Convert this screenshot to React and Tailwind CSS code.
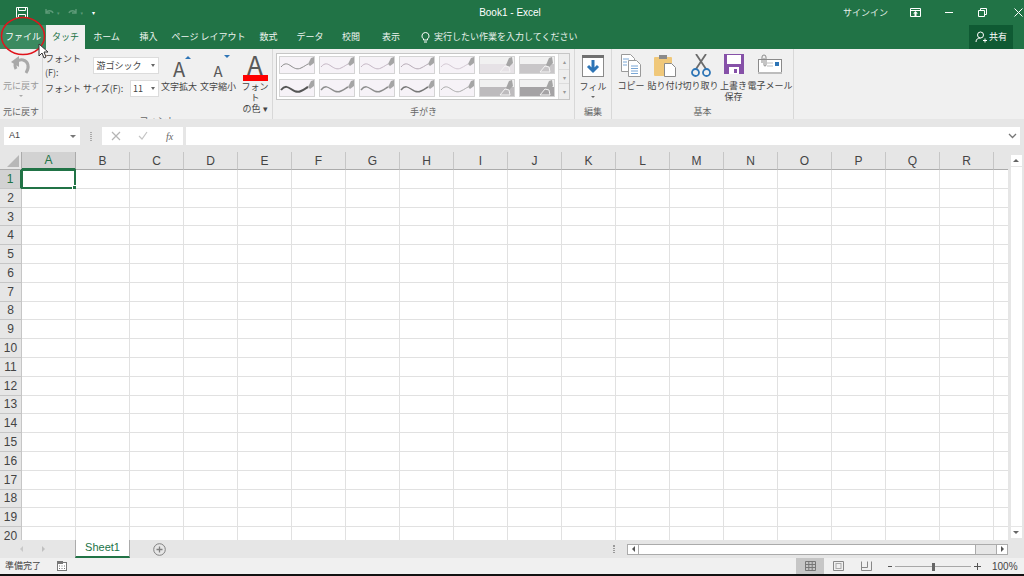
const font = { fontFamily: '"Noto Sans CJK JP", "Noto Sans", sans-serif' };
const columns = "ABCDEFGHIJKLMNOPQR".split("");
const rows = Array.from({ length: 20 }, (_, i) => i + 1);

const Wave = ({ color, width }) => (
  <svg width="36" height="18" viewBox="0 0 36 18" className="block">
    <rect x="0.5" y="0.5" width="35" height="17" fill="#f6f2f7" stroke="#d4d4d4" />
    <path d="M2 11c4-5 7-3 10-1s6 4 10 2 5-3 7-4" fill="none" stroke={color} strokeWidth={width} />
    <path d="M29 8l3-6 3-1v6l-4 3z" fill="#a5a5a5" />
  </svg>
);

const Marker = ({ color, top }) => (
  <svg width="36" height="18" viewBox="0 0 36 18" className="block">
    <rect x="0.5" y="0.5" width="35" height="17" fill="#f1f1f1" stroke="#d4d4d4" />
    <rect x="1" y={top} width="34" height={16 - top + 1} fill={color} />
    <path d="M27 9l3-7 3-1 1 6-4 4z" fill="#a5a5a5" />
    <path d="M21 16l5-6 4 1 1 5z" fill="none" stroke="#f4f4f4" strokeWidth="1" />
  </svg>
);

const FileIcon = () => (
  <svg width="14" height="13" viewBox="0 0 14 13">
    <path d="M1.5 1.5h11v10h-11z" fill="none" stroke="#fff" />
    <path d="M3.5 1.5v3h7v-3M3.5 11.5v-3h7v3" fill="none" stroke="#fff" />
  </svg>
);

const Undo = ({ color }) => (
  <svg width="11" height="10" viewBox="0 0 11 10">
    <path d="M2 5c1-3 6-3 7 0M2 1v4h4" fill="none" stroke={color} strokeWidth="1.4" />
  </svg>
);

const Tab = ({ label, w, active }) => (
  <div
    className={`flex h-full items-center justify-center text-[9px] ${w} ${
      active ? "bg-[#f0f0f0] text-[#217346]" : "text-[#eef5f0]"
    }`}
  >
    {label}
  </div>
);

const GroupLabel = ({ children }) => (
  <div className="pb-[1px] text-center text-[9px] leading-[13px] text-[#666]">{children}</div>
);

const Combo = ({ value, w }) => (
  <div className={`flex h-[17px] items-center justify-between border border-[#dcdcdc] bg-white px-[2px] text-[9px] text-[#444] ${w}`}>
    <span>{value}</span>
    <span className="mr-[1px] border-x-[2px] border-t-[3px] border-x-transparent border-t-[#666]" />
  </div>
);

const BigButton = ({ w, icon, lines }) => (
  <div className={`flex flex-col items-center ${w}`}>
    <div className="flex h-[29px] items-end justify-center">{icon}</div>
    <div className="text-center text-[9px] leading-[11px] text-[#444]">
      {lines.map((l) => (
        <div key={l}>{l}</div>
      ))}
    </div>
  </div>
);

const Ribbon = () => (
  <div className="flex h-[70px] bg-[#f0f0f0]">
    {/* undo */}
    <div className="flex w-[43px] flex-col border-r border-[#d8d8d8]">
      <div className="flex flex-1 flex-col items-center text-[9px] leading-[11px] text-[#9a9a9a]">
        <svg width="24" height="24" viewBox="0 0 24 24" className="mt-[4px]">
          <path d="M7 16C4 10 9 6 14 7c5 1 7 7 3 13" fill="none" stroke="#a9a9a9" strokeWidth="3" />
          <path d="M2 9l8-6v11z" fill="#a9a9a9" />
        </svg>
        <div className="mt-[3px]">元に戻す</div>
        <div className="mt-[4px] border-x-[2px] border-t-[2px] border-x-transparent border-t-[#aaa]" />
      </div>
      <GroupLabel>元に戻す</GroupLabel>
    </div>

    {/* font */}
    <div className="flex w-[230px] flex-col border-r border-[#d8d8d8]">
      <div className="flex flex-1 pt-[3px]">
        <div className="w-[116px] pl-[2px] text-[9px] text-[#444]">
          <div className="flex items-center justify-between">
            <span>フォント(F):</span>
            <Combo value="游ゴシック" w="w-[67px]" />
          </div>
          <div className="mt-[1px] flex items-center justify-between">
            <span>フォント サイズ(F):</span>
            <Combo value="11" w="w-[29px]" />
          </div>
        </div>
        <div className="ml-[2px] flex gap-[3px]">
          <BigButton
            w="w-[36px]"
            lines={["文字拡大"]}
            icon={
              <div className="relative mb-[2px] text-[20px] leading-[20px] text-[#595959]" style={font}>
                A
                <span className="absolute -right-[6px] -top-[3px] border-x-[3px] border-b-[3px] border-x-transparent border-b-[#2e75b6]" />
              </div>
            }
          />
          <BigButton
            w="w-[36px]"
            lines={["文字縮小"]}
            icon={
              <div className="relative mb-[2px] text-[15px] leading-[16px] text-[#595959]">
                A
                <span className="absolute -right-[7px] -top-[8px] border-x-[3px] border-t-[3px] border-x-transparent border-t-[#2e75b6]" />
              </div>
            }
          />
          <BigButton
            w="w-[32px]"
            lines={["フォント", "の色 ▾"]}
            icon={
              <div className="flex flex-col items-center">
                <span className="text-[26px] leading-[22px] text-[#595959]">A</span>
                <span className="h-[6px] w-[25px] bg-[#ff0000]" />
              </div>
            }
          />
        </div>
      </div>
      <GroupLabel>フォント</GroupLabel>
    </div>

    {/* ink */}
    <div className="flex w-[302px] flex-col border-r border-[#d8d8d8]">
      <div className="flex flex-1 items-start pl-[3px] pt-[4px]">
        <div className="flex h-[47px] border border-[#c6c6c6] bg-white">
          <div className="grid grid-cols-[repeat(7,36px)] gap-x-[4px] gap-y-[5px] px-[2px] py-[2px]">
            <Wave color="#8a8a8a" width="1" />
            <Wave color="#c4b6c4" width="1" />
            <Wave color="#c4b6c4" width="1" />
            <Wave color="#b5a9b5" width="1" />
            <Wave color="#d3c8d3" width="1" />
            <Marker color="#e6e2e6" top={8} />
            <Marker color="#c8c6c8" top={8} />
            <Wave color="#555" width="2" />
            <Wave color="#8d8d8d" width="1.5" />
            <Wave color="#8d8d8d" width="1.5" />
            <Wave color="#777" width="1.5" />
            <Wave color="#aaa" width="1" />
            <Marker color="#bdbbbd" top={8} />
            <Marker color="#a5a3a5" top={8} />
          </div>
          <div className="ml-[1px] flex w-[11px] flex-col border-l border-[#dcdcdc] bg-[#eeeeee] text-center text-[6px] leading-[15px] text-[#999]">
            <div className="h-[15px]">▴</div>
            <div className="h-[15px] border-y border-[#dcdcdc]">▾</div>
            <div className="h-[15px]">▾</div>
          </div>
        </div>
      </div>
      <GroupLabel>手がき</GroupLabel>
    </div>

    {/* editing */}
    <div className="flex w-[37px] flex-col border-r border-[#d8d8d8]">
      <div className="flex flex-1 flex-col items-center pt-[6px] text-[9px] leading-[11px] text-[#444]">
        <svg width="22" height="22" viewBox="0 0 22 22">
          <rect x="0.5" y="0.5" width="21" height="21" fill="#fff" stroke="#8a8a8a" />
          <rect x="0" y="0" width="22" height="3" fill="#707070" />
          <path d="M11 5v11M6 11l5 5 5-5" fill="none" stroke="#2e75b6" strokeWidth="3" />
        </svg>
        <div className="mt-[4px]">フィル</div>
        <div className="mt-[4px] border-x-[2px] border-t-[2px] border-x-transparent border-t-[#666]" />
      </div>
      <GroupLabel>編集</GroupLabel>
    </div>

    {/* basic */}
    <div className="flex w-[182px] flex-col border-r border-[#d8d8d8]">
      <div className="flex flex-1 pl-[3px] pt-[5px] text-[9px] leading-[11px] text-[#444]">
        <BasicButton w="w-[32px]" lines={["コピー"]}>
          <svg width="22" height="23" viewBox="0 0 22 23">
            <path d="M1.5.5h9l4 4v13h-13z" fill="#fff" stroke="#9a9a9a" />
            <path d="M8.5 6.5h8l4 4v12h-12z" fill="#fff" stroke="#9a9a9a" />
            <path d="M3 5h6M3 8h4M3 11h4M11 12h7M11 14.500h7M11 17h7M11 19.500h7" stroke="#7aa7d6" />
          </svg>
        </BasicButton>
        <BasicButton w="w-[37px]" lines={["貼り付け"]}>
          <svg width="23" height="23" viewBox="0 0 23 23">
            <rect x="0" y="3" width="18" height="19" rx="1" fill="#f0c87a" />
            <rect x="5" y="1" width="8" height="4" fill="#8a8a8a" />
            <path d="M10.500 9.500h7l4 4v9h-11z" fill="#fff" stroke="#8a8a8a" />
          </svg>
        </BasicButton>
        <BasicButton w="w-[33px]" lines={["切り取り"]}>
          <svg width="20" height="23" viewBox="0 0 20 23">
            <path d="M5 15L15 0M15 15L5 0" stroke="#6b6b6b" strokeWidth="1.8" fill="none" />
            <circle cx="4.500" cy="18.500" r="3.500" fill="none" stroke="#2e75b6" strokeWidth="1.800" />
            <circle cx="15.500" cy="18.500" r="3.500" fill="none" stroke="#2e75b6" strokeWidth="1.800" />
          </svg>
        </BasicButton>
        <BasicButton w="w-[33px]" lines={["上書き", "保存"]}>
          <svg width="20" height="20" viewBox="0 0 20 20" className="mb-[3px]">
            <rect width="20" height="20" fill="#8651a8" />
            <rect x="3" y="1" width="14" height="9" fill="#fff" />
            <rect x="5" y="13" width="10" height="7" fill="#fff" />
            <rect x="10" y="15" width="3" height="4" fill="#8651a8" />
          </svg>
        </BasicButton>
        <BasicButton w="w-[40px]" lines={["電子メール"]}>
          <svg width="24" height="21" viewBox="0 0 24 21" className="mb-[2px]">
            <rect x="0.500" y="5.500" width="23" height="13" fill="#fff" stroke="#8a8a8a" />
            <rect x="0" y="18" width="24" height="2" fill="#bdbdbd" />
            <rect x="17" y="8" width="4" height="4" fill="#2e75b6" />
            <path d="M9 9h6M9 12h6" stroke="#bdbdbd" />
            <path d="M4 9V3a2 2 0 0 1 4 0v8a1 1 0 0 1-2 0V4" fill="none" stroke="#8a8a8a" />
          </svg>
        </BasicButton>
      </div>
      <GroupLabel>基本</GroupLabel>
    </div>
  </div>
);

function BasicButton({ w, lines, children }) {
  return (
    <div className={`flex flex-col items-center ${w}`}>
      <div className="flex h-[24px] items-start justify-center">{children}</div>
      <div className="mt-[2px] whitespace-nowrap text-center">
        {lines.map((l) => (
          <div key={l}>{l}</div>
        ))}
      </div>
    </div>
  );
}

const FormulaBar = () => (
  <div className="flex h-[30px] items-center bg-[#e6e6e6] pb-[2px] pl-[4px] pr-[4px]">
    <div className="flex h-[18px] w-[76px] items-center justify-between bg-white pl-[5px] pr-[4px] text-[9px] text-[#444]" style={{ fontFamily: '"Liberation Sans", sans-serif' }}>
      <span>A1</span>
      <span className="border-x-[3px] border-t-[3px] border-x-transparent border-t-[#777]" />
    </div>
    <div className="ml-[10px] mr-[10px] h-[9px] w-[2px] border-x border-dotted border-[#aaa]" />
    <div className="flex h-[18px] w-[81px] items-center bg-white text-[#b5b5b5]">
      <svg width="10" height="10" viewBox="0 0 10 10" className="ml-[9px]">
        <path d="M1 1l8 8M9 1l-8 8" stroke="#b5b5b5" strokeWidth="1.200" />
      </svg>
      <svg width="10" height="10" viewBox="0 0 10 10" className="ml-[17px]">
        <path d="M1 5l3 3 5-7" fill="none" stroke="#c4c4c4" strokeWidth="1.200" />
      </svg>
      <span className="ml-[18px] text-[10px] italic text-[#666]" style={{ fontFamily: '"Liberation Serif", serif' }}>
        fx
      </span>
    </div>
    <div className="ml-[3px] flex h-[18px] flex-1 items-center justify-end bg-white pr-[3px]">
      <svg width="9" height="6" viewBox="0 0 9 6">
        <path d="M1 1l3.500 3.500L8 1" fill="none" stroke="#777" strokeWidth="1.300" />
      </svg>
    </div>
  </div>
);

const Grid = () => (
  <div className="flex min-h-0 flex-1 bg-[#e6e6e6]">
    <div className="min-w-0 flex-1 overflow-hidden">
      <div className="grid grid-cols-[22px_repeat(18,54px)_14px] grid-rows-[18px_repeat(20,18.8px)]" style={font}>
        <div className="relative border-b border-r border-[#ababab] bg-[#e6e6e6]">
          <span className="absolute bottom-[2px] right-[2px] border-b-[12px] border-l-[12px] border-b-[#b7b7b7] border-l-transparent" />
        </div>
        {columns.map((c) => (
          <div
            key={c}
            className={`flex items-center justify-center border-r text-[12px] ${
              c === "A"
                ? "border-b-2 border-r-[#ababab] border-b-[#217346] bg-[#d2d2d2] text-[#217346]"
                : "border-b border-r-[#c6c6c6] border-b-[#ababab] bg-[#e6e6e6] text-[#444]"
            }`}
            style={{ fontFamily: '"Liberation Sans", sans-serif' }}
          >
            {c}
          </div>
        ))}
        <div className="border-b border-[#ababab] bg-[#e6e6e6]" />
        {rows.map((r) => (
          <Row key={r} r={r} />
        ))}
      </div>
    </div>
    <div className="flex w-[16px] flex-col items-center bg-[#e6e6e6] pt-[3px]">
      <div className="flex h-[11px] w-[11px] items-center justify-center bg-white">
        <span className="border-x-[3px] border-b-[3px] border-x-transparent border-b-[#666]" />
      </div>
      <div className="mt-[1px] w-[11px] flex-1 bg-white" />
      <div className="mb-[2px] mt-[1px] flex h-[11px] w-[11px] items-center justify-center bg-white">
        <span className="border-x-[3px] border-t-[3px] border-x-transparent border-t-[#666]" />
      </div>
    </div>
  </div>
);

function Row({ r }) {
  const num = '"Liberation Sans", sans-serif';
  return (
    <>
      <div
        className={`flex items-center justify-center border-b border-r border-[#c6c6c6] text-[12px] ${
          r === 1 ? "border-r-2 border-r-[#217346] bg-[#d2d2d2] text-[#217346]" : "bg-[#e6e6e6] text-[#444]"
        }`}
        style={{ fontFamily: num }}
      >
        {r}
      </div>
      {columns.map((c) => (
        <div key={c} className="relative border-b border-r border-[#e1e1e1] bg-white">
          {r === 1 && c === "A" && (
            <div className="absolute -left-[1px] -top-[1px] bottom-[-1px] right-[-1px] border-2 border-[#217346]">
              <span className="absolute -bottom-[3px] -right-[3px] h-[5px] w-[5px] border border-white bg-[#217346]" />
            </div>
          )}
        </div>
      ))}
      <div className="border-b border-[#e1e1e1] bg-white" />
    </>
  );
}

const SheetBar = () => (
  <div className="flex h-[18px] items-stretch bg-[#e6e6e6] text-[#c0c0c0]">
    <div className="flex w-[75px] items-center pl-[20px]">
      <span className="border-y-[3px] border-r-[3px] border-y-transparent border-r-[#c8c8c8]" />
      <span className="ml-[19px] border-y-[3px] border-l-[3px] border-y-transparent border-l-[#c0c0c0]" />
    </div>
    <div className="flex w-[55px] items-center justify-center border-x border-b-2 border-x-[#ababab] border-b-[#217346] bg-white pb-[1px] text-[11px] text-[#217346]" style={{ fontFamily: '"Liberation Sans", sans-serif' }}>
      Sheet1
    </div>
    <div className="ml-[23px] flex items-center">
      <svg width="13" height="13" viewBox="0 0 13 13">
        <circle cx="6.500" cy="6.500" r="5.800" fill="none" stroke="#808080" />
        <path d="M3.500 6.500h6M6.500 3.500v6" stroke="#808080" strokeWidth="1.300" />
      </svg>
    </div>
    <div className="ml-[447px] flex items-center">
      <div className="h-[8px] w-[2px] border-x border-dotted border-[#999]" />
    </div>
    <div className="ml-[12px] flex items-center">
      <div className="flex h-[11px] w-[381px] items-stretch border border-[#ababab] bg-[#e6e6e6]">
        <div className="flex w-[11px] items-center justify-center border-r border-[#ababab] bg-white">
          <span className="border-y-[3px] border-r-[3px] border-y-transparent border-r-[#555]" />
        </div>
        <div className="w-[337px] border-r border-[#ababab] bg-white" />
        <div className="flex-1" />
        <div className="flex w-[11px] items-center justify-center border-l border-[#ababab] bg-white">
          <span className="border-y-[3px] border-l-[3px] border-y-transparent border-l-[#555]" />
        </div>
      </div>
    </div>
  </div>
);

const StatusBar = () => (
  <div className="flex h-[16px] items-center bg-[#f0f0f0] text-[9px] text-[#444]">
    <span className="ml-[5px]">準備完了</span>
    <svg width="10" height="10" viewBox="0 0 10 10" className="ml-[16px]">
      <rect x="0.500" y="1.500" width="9" height="8" fill="#fff" stroke="#777" />
      <rect x="0" y="0" width="6" height="3" fill="#777" />
      <path d="M2 5h1M4.500 5h1M7 5h1M2 7.500h1M4.500 7.500h1M7 7.500h1" stroke="#777" />
    </svg>
    <div className="ml-auto flex h-full items-center">
      <div className="flex h-full w-[28px] items-center justify-center bg-[#c6c6c6]">
        <svg width="11" height="10" viewBox="0 0 11 10">
          <path d="M.5.500h10v9H.5zM.5 3.500h10M.5 6.500h10M3.800.500v9M7.200.500v9" fill="none" stroke="#777" />
        </svg>
      </div>
      <svg width="11" height="10" viewBox="0 0 11 10" className="ml-[9px]">
        <path d="M.5.500h10v9H.5z" fill="none" stroke="#888" />
        <rect x="3" y="2.500" width="5" height="5" fill="none" stroke="#aaa" />
      </svg>
      <svg width="11" height="10" viewBox="0 0 11 10" className="ml-[17px]">
        <path d="M.5.500v9h10v-9M.5 6.500h6V.500" fill="none" stroke="#888" />
      </svg>
      <div className="ml-[16px] h-[1px] w-[4px] bg-[#555]" />
      <div className="relative ml-[3px] h-[1px] w-[76px] bg-[#a8a8a8]">
        <span className="absolute -top-[3px] left-[37px] h-[8px] w-[3px] bg-[#666]" />
      </div>
      <svg width="7" height="7" viewBox="0 0 7 7" className="ml-[3px]">
        <path d="M0 3.500h7M3.500 0v7" stroke="#555" />
      </svg>
      <span className="ml-[11px] mr-[7px] w-[25px] text-[10px]" style={{ fontFamily: '"Liberation Sans", sans-serif' }}>100%</span>
    </div>
  </div>
);

const App = () => (
  <div className="relative flex h-[576px] w-[1024px] flex-col overflow-hidden bg-[#e6e6e6]" style={font}>
    {/* title bar */}
    <div className="flex h-[25px] items-center bg-[#217346] text-white">
      <div className="flex w-[400px] items-center gap-[6px] pl-[15px]">
        <FileIcon />
        <div className="ml-[9px] flex items-center gap-[2px]">
          <Undo color="#5d9a78" />
          <span className="text-[5px] text-[#5d9a78]">▾</span>
        </div>
        <div className="ml-[1px] flex items-center gap-[2px] -scale-x-100">
          <span className="text-[5px] text-[#5d9a78]">▾</span>
          <Undo color="#5d9a78" />
        </div>
        <span className="ml-[3px] text-[6px] leading-none">▾</span>
      </div>
      <div className="w-[220px] text-center text-[10px]" style={{ fontFamily: '"Liberation Sans", sans-serif' }}>
        Book1 - Excel
      </div>
      <div className="flex flex-1 items-center text-[9px] text-[#e8f1eb]">
        <span className="ml-[223px]">サインイン</span>
        <svg width="11" height="9" viewBox="0 0 11 9" className="ml-[22px]">
          <path d="M.5.500h10v8H.5zM.5 2.500h10" fill="none" stroke="#fff" />
          <path d="M5.500 3l2.500 2.500H3z M4.500 5h2v3h-2z" fill="#fff" />
        </svg>
        <div className="ml-[24px] h-[1px] w-[8px] bg-white" />
        <svg width="9" height="9" viewBox="0 0 9 9" className="ml-[25px]">
          <path d="M.5 2.500h6v6h-6zM2.500 2.500v-2h6v6h-2" fill="none" stroke="#fff" />
        </svg>
        <svg width="9" height="9" viewBox="0 0 9 9" className="ml-[27px]">
          <path d="M.5.500l8 8M8.500.500l-8 8" stroke="#fff" />
        </svg>
      </div>
    </div>

    {/* tabs */}
    <div className="flex h-[24px] items-stretch bg-[#217346]">
      <div className="flex w-[46px] items-center justify-center bg-[#3b8a60] text-[9px] text-white">ファイル</div>
      <Tab label="タッチ" w="w-[39px]" active />
      <Tab label="ホーム" w="w-[43px]" />
      <Tab label="挿入" w="w-[41px]" />
      <Tab label="ページ レイアウト" w="w-[79px]" />
      <Tab label="数式" w="w-[41px]" />
      <Tab label="データ" w="w-[42px]" />
      <Tab label="校閲" w="w-[40px]" />
      <Tab label="表示" w="w-[40px]" />
      <div className="ml-[10px] flex items-center gap-[4px] text-[9px] text-[#e8f1eb]">
        <svg width="9" height="11" viewBox="0 0 9 11">
          <path d="M4.500.500a3.500 3.500 0 0 1 2 6.400V8h-4V6.900a3.500 3.500 0 0 1 2-6.400zM3 10h3" fill="none" stroke="#fff" />
        </svg>
        <span>実行したい作業を入力してください</span>
      </div>
      <div className="ml-auto mr-[11px] flex w-[44px] items-center justify-center gap-[2px] bg-[#0f5a33] text-[9px] text-white">
        <svg width="12" height="12" viewBox="0 0 12 12">
          <circle cx="5.500" cy="4" r="3" fill="none" stroke="#fff" />
          <path d="M1 11c0-3 2-4 4.500-4M8 9.500h4M10 7.500v4" fill="none" stroke="#fff" />
        </svg>
        <span>共有</span>
      </div>
    </div>

    <Ribbon />
    <div className="h-[3px] bg-[#e6e6e6]" />
    <FormulaBar />
    <Grid />
    <SheetBar />
    <StatusBar />
    <div className="h-[2px] bg-[#111]" />

    {/* red annotation and mouse cursor */}
    <svg width="52" height="42" viewBox="0 0 52 42" className="absolute left-0 top-[15px]">
      <ellipse cx="23" cy="21" rx="21.500" ry="18.500" fill="none" stroke="#e0141c" strokeWidth="1.500" />
    </svg>
    <svg width="12" height="17" viewBox="0 0 12 17" className="absolute left-[38px] top-[43px]">
      <path d="M1 1v12l3-3 2 5 2-1-2-5h4z" fill="#fff" stroke="#333" />
    </svg>
  </div>
);

export default App;
